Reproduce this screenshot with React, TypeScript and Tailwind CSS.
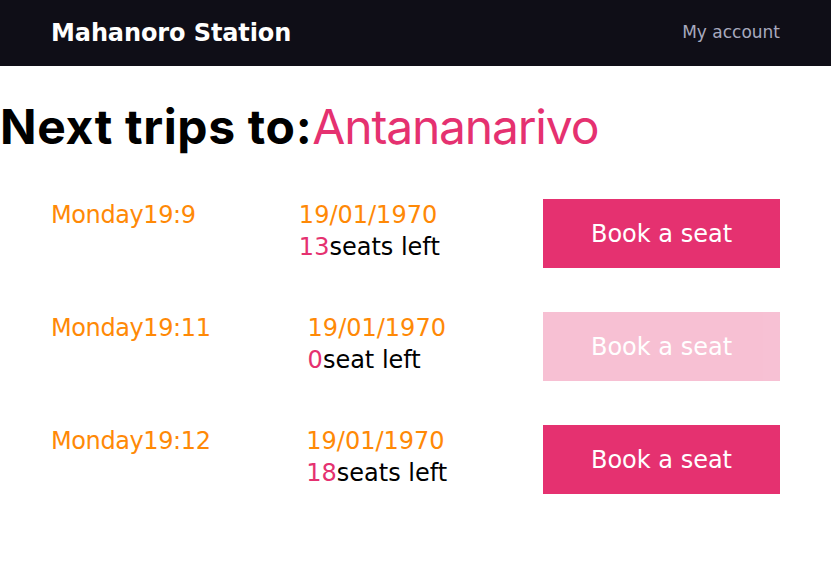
import React from "react";

const trips = [
  { time: "Monday19:9", date: "19/01/1970", seats: 13, label: "seats left" },
  { time: "Monday19:11", date: "19/01/1970", seats: 0, label: "seat left" },
  { time: "Monday19:12", date: "19/01/1970", seats: 18, label: "seats left" },
];

const dv = { fontFamily: "'DejaVu Sans', Inter, sans-serif" };

export default function App() {
  return (
    <div className="min-h-screen bg-white" style={dv}>
      <header className="h-[66px] bg-[#0f0e17] px-[51px] flex items-center justify-between">
        <h2 className="text-2xl font-bold text-[#fffffe] tracking-[-0.1px]">Mahanoro Station</h2>
        <a className="text-[17px] text-[#a7a9be]">My account</a>
      </header>
      <main>
        <h1
          className="mt-[37px] text-5xl leading-none"
          style={{ fontFamily: "Inter, 'Noto Sans', sans-serif" }}
        >
          <span className="font-bold text-black tracking-[0.65px]">Next trips to:</span>
          <span className="text-[#e53170] tracking-[-1.2px]">Antananarivo</span>
        </h1>
        <ul className="mt-[48px] px-[51px] flex flex-col gap-[44px]">
          {trips.map((t, i) => (
            <li key={i} className="flex items-start justify-between text-2xl leading-8">
              <span className="text-[#ff8906] tracking-[-0.4px]">{t.time}</span>
              <div className="flex flex-col">
                <span className="text-[#ff8906]">{t.date}</span>
                <span className="text-black">
                  <span className="text-[#e53170]">{t.seats}</span>
                  {t.label}
                </span>
              </div>
              <button
                className={
                  "w-[237px] h-[69px] bg-[#e53170] text-white text-2xl" +
                  (t.seats === 0 ? " opacity-30" : "")
                }
              >
                Book a seat
              </button>
            </li>
          ))}
        </ul>
      </main>
    </div>
  );
}
